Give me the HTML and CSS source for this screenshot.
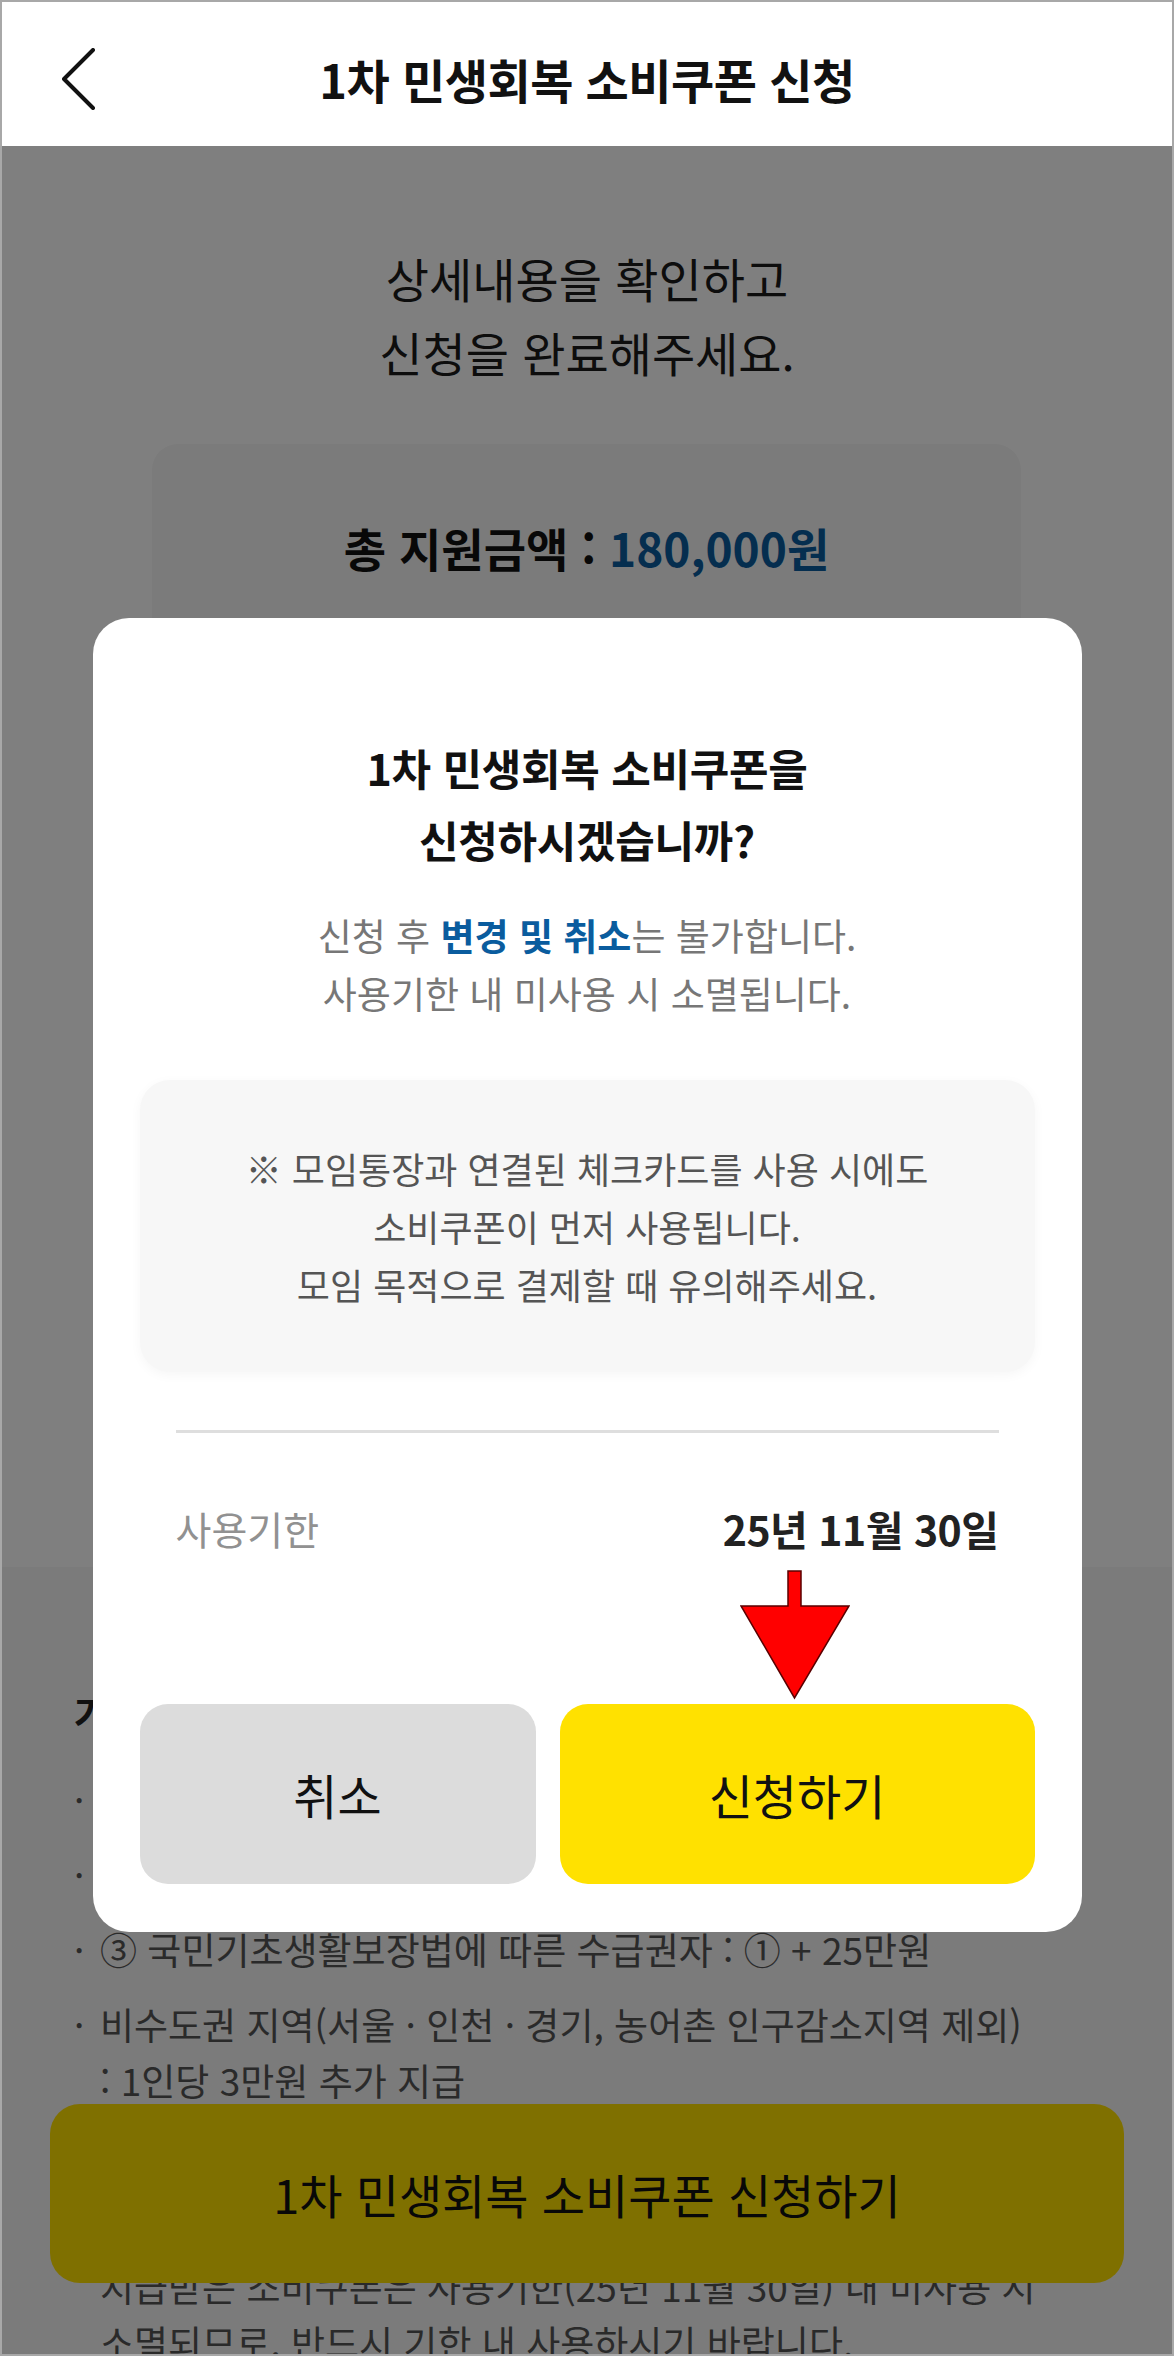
FILE: index.html
```html
<!DOCTYPE html>
<html lang="ko">
<head>
<meta charset="utf-8">
<title>1차 민생회복 소비쿠폰 신청</title>
<link rel="stylesheet" href="styles.css">
</head>
<body>
<div class="page">
  <header class="topbar">
    <button class="back" type="button" aria-label="뒤로">
      <svg width="34" height="62" viewBox="0 0 34 62"><polyline points="31,2 2,31 31,60" fill="none" stroke="#111" stroke-width="4" stroke-linecap="round" stroke-linejoin="round"/></svg>
    </button>
    <h1 class="topbar-title">1차 민생회복 소비쿠폰 신청</h1>
    <span></span>
  </header>

  <main>
    <p class="intro">상세내용을 확인하고<br>신청을 완료해주세요.</p>

    <section class="summary">
      <p class="summary-total">총 지원금액 : <span class="blue">180,000원</span></p>
    </section>

    <section class="guide">
      <h2 class="guide-title">가구원별 지급 기준</h2>
      <ul class="guide-list">
        <li><span class="dot">·</span><span>① 일반 국민 : 1인당 15만원</span></li>
        <li><span class="dot">·</span><span>② 차상위계층 및 한부모가족 : ① + 15만원</span></li>
        <li><span class="dot">·</span><span>③ 국민기초생활보장법에 따른 수급권자 : ① + 25만원</span></li>
        <li><span class="dot">·</span><span>비수도권 지역(서울 · 인천 · 경기, 농어촌 인구감소지역 제외)<br>: 1인당 3만원 추가 지급</span></li>
        <li><span class="dot">·</span><span>사용처 : 주소지 관할 지역 내 연매출 30억 이하 매장<br>(대형마트, 백화점, 온라인몰 등 제외)</span></li>
      </ul>
      <p class="guide-note">지급받은 소비쿠폰은 사용기한(25년 11월 30일) 내 미사용 시<br>소멸되므로, 반드시 기한 내 사용하시기 바랍니다.</p>
    </section>
  </main>

  <div class="bottom-bar">
    <button class="cta" type="button">1차 민생회복 소비쿠폰 신청하기</button>
  </div>
</div>

<div class="dim">
  <div class="modal" role="dialog">
    <h2 class="modal-title">1차 민생회복 소비쿠폰을<br>신청하시겠습니까?</h2>
    <p class="modal-sub">신청 후 <strong class="blue">변경 및 취소</strong>는 불가합니다.<br>사용기한 내 미사용 시 소멸됩니다.</p>
    <div class="notice">※ 모임통장과 연결된 체크카드를 사용 시에도<br>소비쿠폰이 먼저 사용됩니다.<br>모임 목적으로 결제할 때 유의해주세요.</div>
    <hr class="divider">
    <div class="period">
      <span class="period-label">사용기한</span>
      <span class="period-value">25년 11월 30일</span>
    </div>
    <div class="actions">
      <button class="btn btn-cancel" type="button">취소</button>
      <button class="btn btn-ok" type="button">신청하기</button>
    </div>
    <svg class="arrow" width="110" height="130" viewBox="0 0 110 130"><polygon points="48,1 61,1 61,36 109,36 54.5,128 1,36 48,36" fill="#ff0000" stroke="#5a0000" stroke-width="1.5" stroke-linejoin="miter"/></svg>
  </div>
</div>

<div class="frame"></div>
</body>
</html>
```

FILE: styles.css
```css
* { box-sizing: border-box; }

html, body {
  margin: 0;
  padding: 0;
  width: 1174px;
  height: 2356px;
  overflow: hidden;
  background: #ffffff;
  font-family: "Noto Sans CJK KR", "Noto Sans", sans-serif;
  color: #1a1a1a;
}

p, h1, h2, ul { margin: 0; padding: 0; }
ul { list-style: none; }
button { font-family: inherit; border: 0; padding: 0; cursor: pointer; }

.page { position: relative; }

/* header */
.topbar {
  position: relative;
  z-index: 20;
  height: 146px;
  padding-top: 12px;
  background: #ffffff;
  display: grid;
  grid-template-columns: 1fr auto 1fr;
  align-items: center;
}
.back {
  justify-self: start;
  margin-left: 62px;
  background: none;
  display: flex;
}
.topbar-title {
  font-size: 47px;
  font-weight: 700;
  line-height: 60px;
  color: #111;
  white-space: nowrap;
  letter-spacing: -0.5px;
}

/* underlying page */
.intro {
  padding-top: 95px;
  text-align: center;
  font-size: 47px;
  line-height: 74px;
  color: #1a1a1a;
}

.summary {
  margin: 55px 153px 0 152px;
  min-height: 1053px;
  padding: 75px 40px 0;
  border-radius: 26px;
  background: #f6f6f6;
}
.summary-total {
  text-align: center;
  font-size: 46px;
  font-weight: 700;
  line-height: 56px;
  color: #111;
  white-space: nowrap;
}
.blue { color: #0a5c9e; font-weight: 700; }

.guide {
  margin-top: 70px;
  padding: 120px 74px 0;
  min-height: 800px;
  background: #f6f6f6;
}
.guide-title {
  font-size: 38px;
  font-weight: 700;
  line-height: 50px;
  color: #222;
}
.guide-list {
  margin-top: 34px;
  display: flex;
  flex-direction: column;
  gap: 19px;
  font-size: 37px;
  line-height: 56px;
  color: #555;
}
.guide-list li { display: flex; white-space: nowrap; }
.dot { flex: 0 0 26px; }
.guide-note {
  margin-top: 19px;
  padding-left: 26px;
  font-size: 37px;
  line-height: 56px;
  color: #555;
  white-space: nowrap;
}

.bottom-bar {
  position: fixed;
  left: 50px;
  right: 50px;
  bottom: 73px;
  height: 179px;
  z-index: 5;
  display: flex;
}
.cta {
  flex: 1;
  border-radius: 30px;
  background: #ffe000;
  color: #111;
  font-size: 47px;
  line-height: 60px;
}

/* dim + modal */
.dim {
  position: fixed;
  inset: 0;
  z-index: 10;
  background: rgba(0, 0, 0, 0.5);
  padding-top: 618px;
}
.modal {
  position: relative;
  width: 989px;
  margin: 0 auto;
  padding: 113px 47px 48px;
  border-radius: 36px;
  background: #ffffff;
}
.modal-title {
  text-align: center;
  font-size: 43px;
  font-weight: 700;
  line-height: 72px;
  color: #111;
  letter-spacing: -0.3px;
}
.modal-sub {
  margin-top: 31px;
  text-align: center;
  font-size: 37px;
  line-height: 58px;
  color: #777;
}
.notice {
  margin-top: 58px;
  padding: 59px 20px;
  border-radius: 30px;
  background: #f7f7f7;
  box-shadow: 0 3px 12px rgba(0, 0, 0, 0.04);
  text-align: center;
  font-size: 36px;
  line-height: 58px;
  color: #555;
  white-space: nowrap;
}
.divider {
  margin: 58px 36px 0;
  height: 3px;
  border: 0;
  background: #dedede;
}
.period {
  margin-top: 70px;
  padding: 0 36px;
  display: flex;
  justify-content: space-between;
  align-items: center;
  line-height: 50px;
}
.period-label { font-size: 39px; color: #919191; }
.period-value { font-size: 41px; font-weight: 700; color: #222; letter-spacing: -0.5px; }

.actions {
  margin-top: 151px;
  display: flex;
  gap: 24px;
  height: 180px;
}
.btn {
  border-radius: 28px;
  font-size: 48px;
  line-height: 60px;
  color: #111;
}
.btn-cancel { flex: 0 0 396px; background: #dcdcdc; }
.btn-ok { flex: 1; background: #ffe100; }

.arrow {
  position: absolute;
  left: 647px;
  top: 952px;
}

.frame {
  position: fixed;
  inset: 0;
  z-index: 30;
  border: 2px solid #a8a8a8;
  pointer-events: none;
}
```
